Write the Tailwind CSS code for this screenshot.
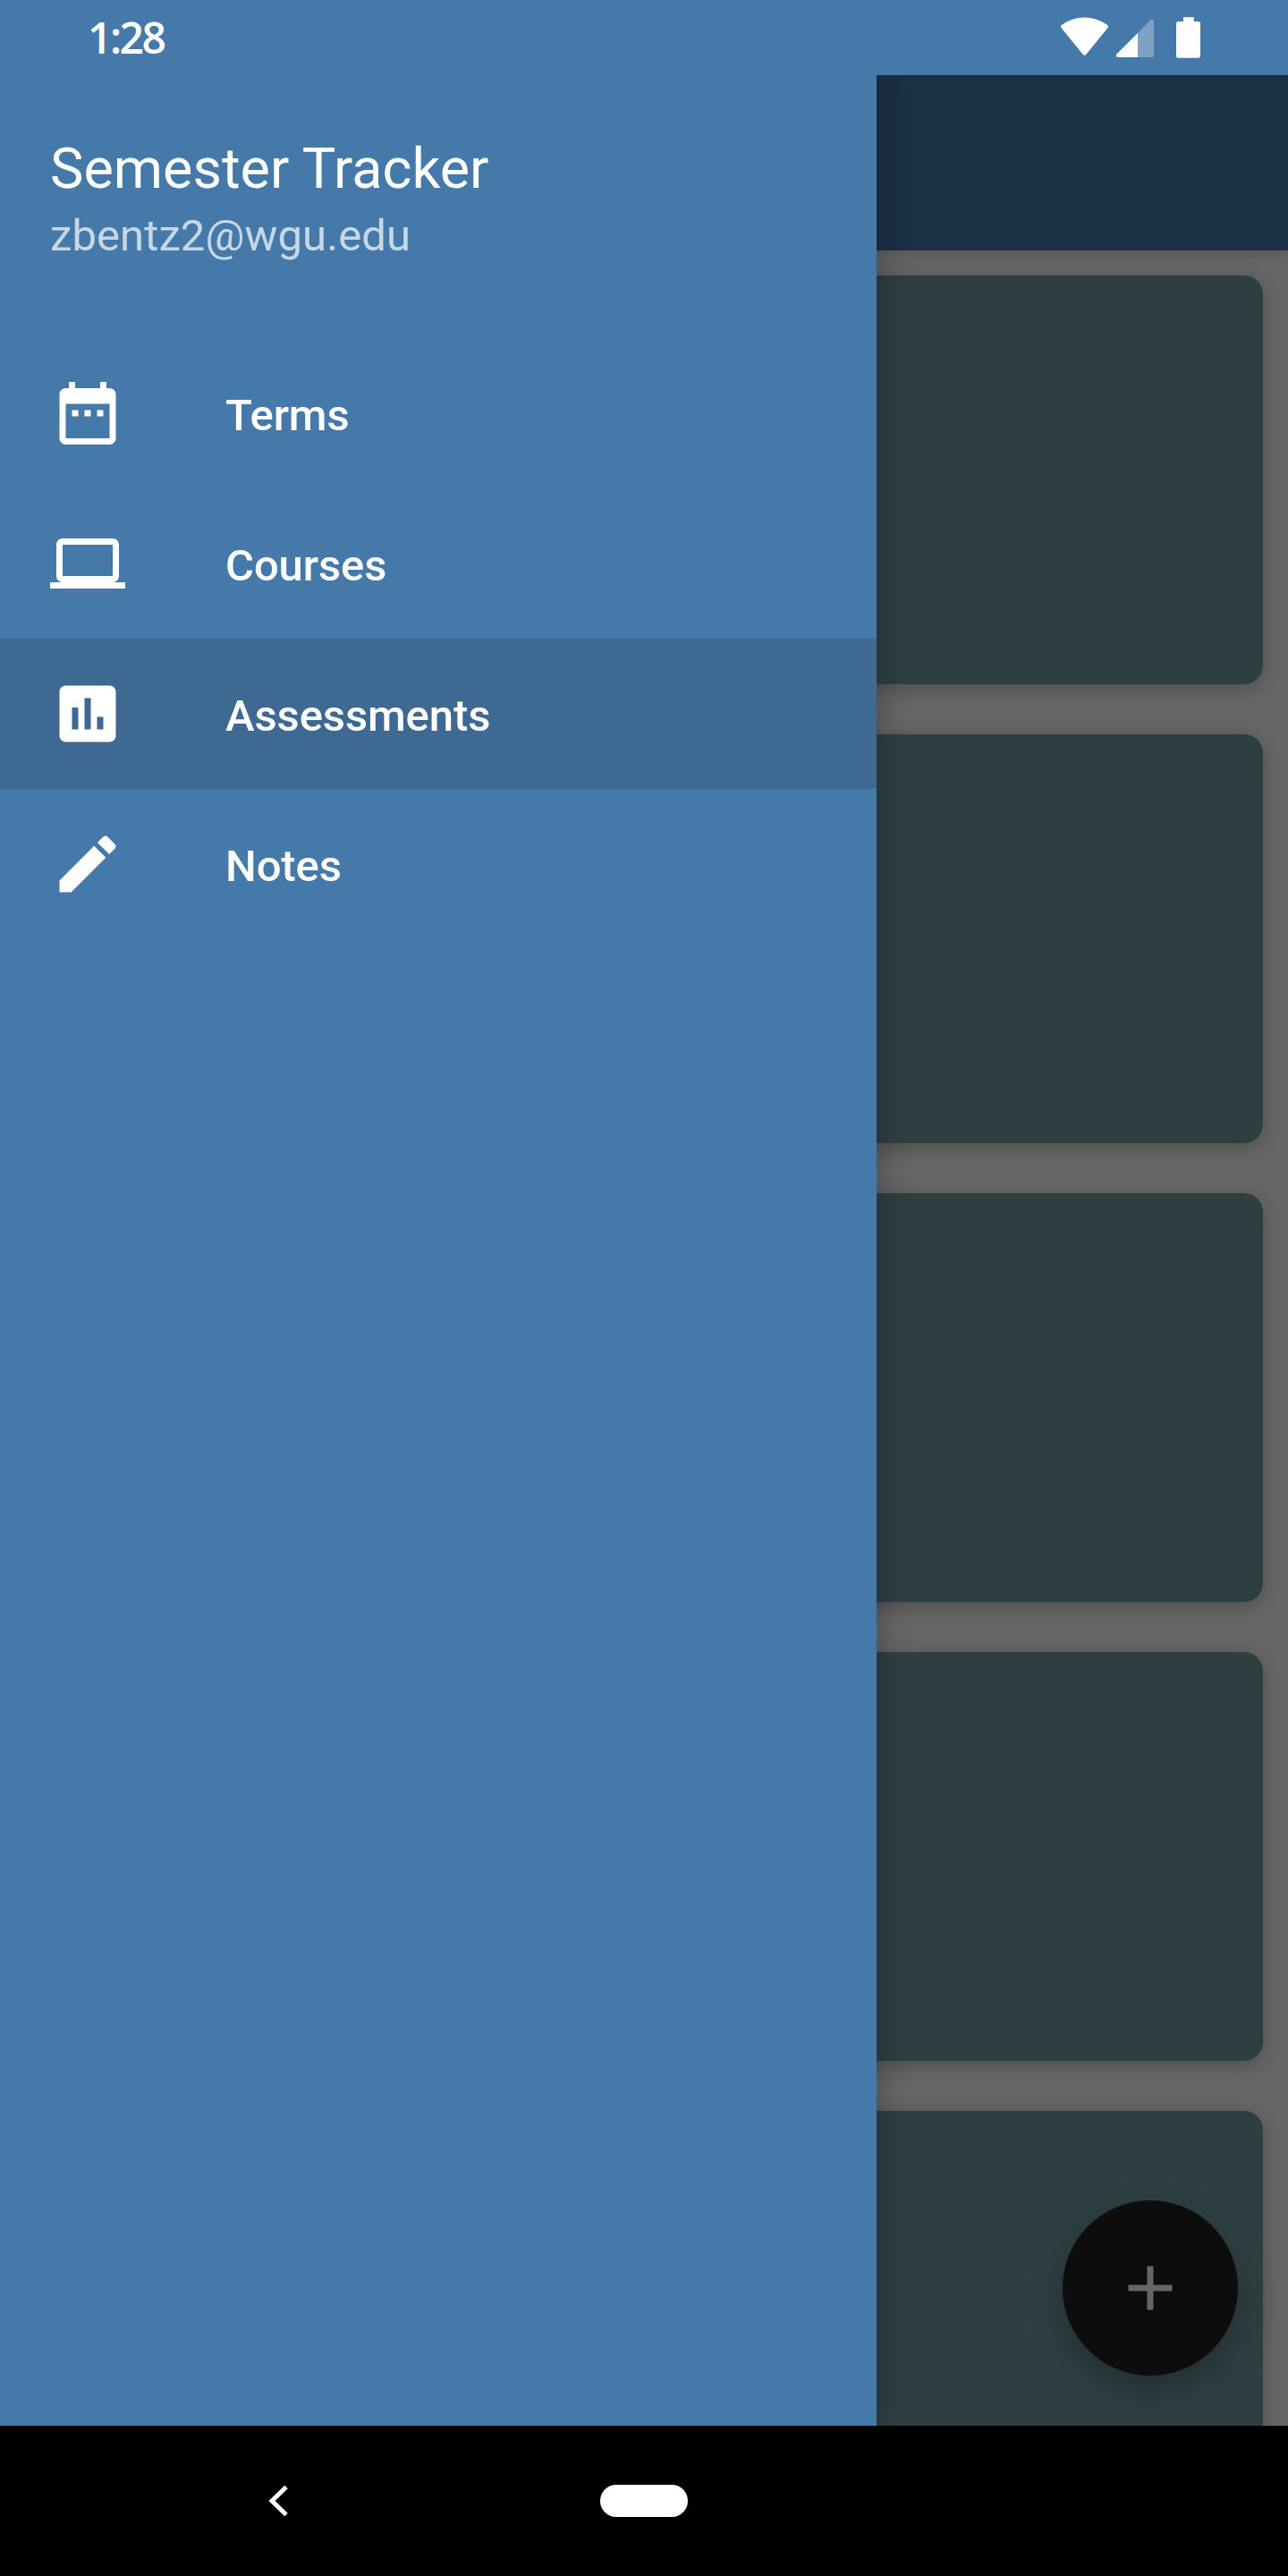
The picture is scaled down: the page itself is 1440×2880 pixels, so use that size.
<!DOCTYPE html>
<html lang="en">
<head>
<meta charset="utf-8">
<title>Semester Tracker</title>
<script src="https://cdn.jsdelivr.net/npm/@tailwindcss/browser@4"></script>
</head>
<body class="bg-black">
<div class="flex h-[2880px] w-[1440px] flex-col overflow-hidden font-['Roboto',sans-serif] text-white">

  <!-- Status bar -->
  <header class="flex h-[84px] shrink-0 items-center justify-between bg-[#4479aa] pr-[98px] pl-[98px]">
    <span class="font-['Open_Sans',sans-serif] text-[48px] leading-[84px] font-semibold tracking-[-2.5px]">1:28</span>
    <svg class="h-[84px] w-[156px]" viewBox="1186 0 156 84" fill="#fff">
      <path d="M1186.8 31.5Q1184.800 29.300 1187.500 27.500C1203 16.800 1222 16.800 1237.500 27.500Q1240.200 29.300 1238.200 31.500L1214.600 60.500Q1212.500 63 1210.400 60.500Z"/>
      <path fill="#7fa2c4" d="M1272 37L1285.500 23.200Q1290 20 1290 24.500V62Q1290 64 1288 64H1272Z"/>
      <path d="M1272 37V64H1250Q1246.500 63.500 1248.500 60.500Z"/>
      <path d="M1323 19.300H1334.700V24H1339.500Q1342 24 1342 26.500V62Q1342 64.700 1339.500 64.700H1317.500Q1315 64.700 1315 62V26.500Q1315 24 1317.500 24H1323Z"/>
    </svg>
  </header>

  <div class="flex h-[2628px] shrink-0 overflow-hidden">
    <!-- Navigation drawer -->
    <aside class="relative z-10 flex w-[980px] shrink-0 flex-col bg-[#4479aa] shadow-[0_0_36px_rgba(0,0,0,0.3)]">
      <div class="flex h-[266px] flex-col px-[56px] pt-[68px]">
        <h1 class="text-[63px] leading-[74px]">Semester Tracker</h1>
        <p class="mt-[5px] text-[49px] leading-[66px] tracking-[0.1px] text-white/70">zbentz2@wgu.edu</p>
      </div>
      <nav class="mt-[28px] flex flex-col text-[49px] font-medium tracking-[-0.1px]">
        <a class="flex h-[168px] items-center gap-[112px] px-[56px]">
          <svg class="size-[84px]" viewBox="0 0 24 24" fill="currentColor"><path d="M9 11H7v2h2v-2zm4 0h-2v2h2v-2zm4 0h-2v2h2v-2zm2-7h-1V2h-2v2H8V2H6v2H5c-1.110 0-1.990.9-1.990 2L3 20c0 1.100.89 2 2 2h14c1.100 0 2-.9 2-2V6c0-1.100-.9-2-2-2zm0 16H5V9h14v11z"/></svg>
          <span class="pt-[5px]">Terms</span>
        </a>
        <a class="flex h-[168px] items-center gap-[112px] px-[56px]">
          <svg class="size-[84px]" viewBox="0 0 24 24" fill="currentColor"><path d="M20 18c1.100 0 1.990-.9 1.990-2L22 6c0-1.100-.9-2-2-2H4c-1.100 0-2 .9-2 2v10c0 1.100.9 2 2 2H0v2h24v-2h-4zM4 6h16v10H4V6z"/></svg>
          <span class="pt-[5px]">Courses</span>
        </a>
        <a class="flex h-[168px] items-center gap-[112px] bg-[#3d6993] px-[56px]">
          <svg class="size-[84px]" viewBox="0 0 24 24" fill="currentColor"><path d="M19 3H5c-1.100 0-2 .9-2 2v14c0 1.100.9 2 2 2h14c1.100 0 2-.9 2-2V5c0-1.100-.9-2-2-2zM9 17H7v-7h2v7zm4 0h-2V7h2v10zm4 0h-2v-4h2v4z"/></svg>
          <span class="pt-[5px]">Assessments</span>
        </a>
        <a class="flex h-[168px] items-center gap-[112px] px-[56px]">
          <svg class="size-[84px]" viewBox="0 0 24 24" fill="currentColor"><path d="M3 17.250V21h3.750L17.810 9.940l-3.750-3.750L3 17.250zM20.710 7.040c.39-.39.39-1.020 0-1.410l-2.340-2.340c-.39-.39-1.020-.39-1.410 0l-1.830 1.830 3.750 3.750 1.830-1.830z"/></svg>
          <span class="pt-[5px]">Notes</span>
        </a>
      </nav>
    </aside>

    <!-- Dimmed content behind the drawer -->
    <main class="relative flex w-[460px] flex-col bg-[#666]">
      <div class="z-[1] h-[196px] shrink-0 bg-[#1b3044] shadow-[0_4px_16px_rgba(0,0,0,0.15)]"></div>
      <div class="flex flex-col gap-[56px] pt-[28px] pr-[28px]">
        <div class="-ml-8 h-[457px] shrink-0 rounded-r-[21px] bg-[#2e3f42] shadow-[0_5px_22px_rgba(0,0,0,0.24)]"></div>
        <div class="-ml-8 h-[457px] shrink-0 rounded-r-[21px] bg-[#2e3f42] shadow-[0_5px_22px_rgba(0,0,0,0.24)]"></div>
        <div class="-ml-8 h-[457px] shrink-0 rounded-r-[21px] bg-[#2e3f42] shadow-[0_5px_22px_rgba(0,0,0,0.24)]"></div>
        <div class="-ml-8 h-[457px] shrink-0 rounded-r-[21px] bg-[#2e3f42] shadow-[0_5px_22px_rgba(0,0,0,0.24)]"></div>
        <div class="-ml-8 h-[457px] shrink-0 rounded-r-[21px] bg-[#2e3f42] shadow-[0_5px_22px_rgba(0,0,0,0.24)]"></div>
      </div>
      <button class="absolute right-[56px] bottom-[56px] flex size-[196px] items-center justify-center rounded-full bg-[#0d0d0d] shadow-[0_16px_40px_rgba(0,0,0,0.26)]" aria-label="Add">
        <svg class="size-[84px]" viewBox="0 0 24 24" fill="#666"><path d="M19 13h-6v6h-2v-6H5v-2h6V5h2v6h6v2z"/></svg>
      </button>
    </main>
  </div>

  <!-- System navigation -->
  <footer class="flex h-[168px] shrink-0 items-center bg-black pl-[300px]">
    <svg class="h-[36px] w-[24px]" viewBox="0 0 24 36" fill="none" stroke="#fff" stroke-width="5"><path d="M20 2.500L4 18L20 33.500"/></svg>
    <div class="ml-[347px] h-[36px] w-[98px] rounded-full bg-white"></div>
  </footer>
</div>
</body>
</html>
